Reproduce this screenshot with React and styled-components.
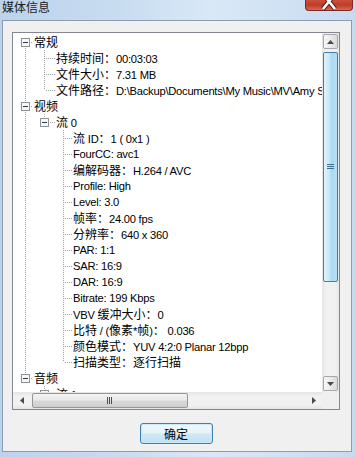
import React from 'react';
import styled, { createGlobalStyle } from 'styled-components';

const GlobalStyle = createGlobalStyle`
  html, body {
    margin: 0;
    padding: 0;
    overflow: hidden;
  }
  body {
    font-family: 'Liberation Sans', 'Noto Sans CJK SC', sans-serif;
  }
`;

const Window = styled.div`
  display: flex;
  flex-direction: column;
  width: 355px;
  height: 457px;
  background: linear-gradient(to right, #bcd3eb 0%, #c9ddf1 35%, #d9e8f7 60%, #c7dbf0 100%);
`;

const TitleBar = styled.div`
  display: flex;
  justify-content: space-between;
  align-items: flex-start;
  height: 20px;
  padding-left: 2px;
`;

const Title = styled.div`
  font-family: 'Noto Sans CJK SC', sans-serif;
  font-size: 12px;
  line-height: 14px;
  color: #1b1b1b;
`;

const CloseButton = styled.div`
  width: 46px;
  height: 10px;
  margin-right: 2px;
  border: 1px solid #7d2a22;
  border-top: 0;
  border-radius: 0 0 4px 4px;
  background: linear-gradient(to bottom, #c9503e 0%, #c13a27 50%, #d66a55 100%);
  overflow: hidden;
  > svg {
    display: block;
  }
`;

const Client = styled.div`
  flex: 1;
  display: flex;
  flex-direction: column;
  align-items: flex-start;
  margin: 0 3px 5px 2px;
  padding: 11px 11px 7px 9px;
  border: 1px solid #8d9db0;
  background: #f0f0f0;
`;

const TreeBox = styled.div`
  display: grid;
  grid-template-columns: 1fr 17px;
  grid-template-rows: 1fr 17px;
  width: 328px;
  height: 378px;
  box-sizing: border-box;
  border: 1px solid #828790;
  background: #fff;
`;

const TreeContent = styled.div`
  overflow: hidden;
  padding-top: 1px;
`;

const Row = styled.div`
  display: flex;
  align-items: center;
  height: 16px;
  white-space: nowrap;
  > svg {
    flex: none;
    display: block;
  }
`;

const Label = styled.span`
  font-family: 'Liberation Sans', 'Noto Sans CJK SC', sans-serif;
  font-size: 11.2px;
  letter-spacing: -0.25px;
  line-height: 16px;
  color: #000;
`;

const Zh = styled.span`
  font-family: 'Noto Sans CJK SC', sans-serif;
  font-size: 12px;
  letter-spacing: 0;
`;

const VScroll = styled.div`
  display: flex;
  flex-direction: column;
  background: linear-gradient(to right, #e4e4e4 0%, #f1f1f1 25%, #f1f1f1 75%, #e6e6e6 100%);
`;

const HScroll = styled.div`
  display: flex;
  align-items: center;
  background: linear-gradient(to bottom, #e4e4e4 0%, #f1f1f1 25%, #f1f1f1 75%, #e6e6e6 100%);
`;

const Corner = styled.div`
  background: #f0f0f0;
`;

const ArrowBox = styled.div`
  display: flex;
  align-items: center;
  justify-content: center;
  flex: none;
  height: 15px;
  margin: 1px;
  box-sizing: border-box;
  border: 1px solid #a7a7a7;
  border-radius: 2px;
  background: linear-gradient(to right, #f7f7f7 0%, #ebebeb 50%, #dadada 100%);
`;

const ArrowPlain = styled.div`
  display: flex;
  align-items: center;
  justify-content: center;
  flex: none;
  width: 17px;
  height: 17px;
`;

const VThumb = styled.div`
  display: flex;
  align-items: center;
  justify-content: center;
  flex: none;
  height: 230px;
  margin: 2px 1px 0;
  box-sizing: border-box;
  border: 1px solid #3c7fb1;
  border-radius: 2px;
  background: linear-gradient(to right, #e3f4fc 0%, #c4e5f6 45%, #a9d9f2 55%, #b6dff5 100%);
`;

const HThumb = styled.div`
  display: flex;
  align-items: center;
  justify-content: center;
  flex: none;
  width: 156px;
  height: 15px;
  margin-left: 2px;
  box-sizing: border-box;
  border: 1px solid #979797;
  border-radius: 2px;
  background: linear-gradient(to bottom, #f4f4f4 0%, #e9e9e9 45%, #d9d9d9 55%, #cecece 100%);
`;

const Spacer = styled.div`
  flex: 1;
`;

const ButtonRow = styled.div`
  display: flex;
  justify-content: center;
  align-self: stretch;
  margin-top: 13px;
`;

const OkButton = styled.button`
  width: 73px;
  height: 21px;
  padding: 0;
  border: 1px solid #3c7fb1;
  border-radius: 3px;
  box-shadow: inset 0 0 0 1px #c6e9fb;
  background: linear-gradient(to bottom, #f3f9fd 0%, #e6f2fa 45%, #cfe7f6 55%, #bfe0f4 100%);
  font-family: 'Noto Sans CJK SC', sans-serif;
  font-size: 12px;
  line-height: 17px;
  color: #000;
`;

const tree = [
  {
    label: '常规',
    children: [
      { label: '持续时间：00:03:03' },
      { label: '文件大小：7.31 MB' },
      { label: '文件路径：D:\\Backup\\Documents\\My Music\\MV\\Amy Studt.flv' },
    ],
  },
  {
    label: '视频',
    children: [
      {
        label: '流 0',
        children: [
          { label: '流 ID：1 ( 0x1 )' },
          { label: 'FourCC: avc1' },
          { label: '编解码器：H.264 / AVC' },
          { label: 'Profile: High' },
          { label: 'Level: 3.0' },
          { label: '帧率：24.00 fps' },
          { label: '分辨率：640 x 360' },
          { label: 'PAR: 1:1' },
          { label: 'SAR: 16:9' },
          { label: 'DAR: 16:9' },
          { label: 'Bitrate: 199 Kbps' },
          { label: 'VBV 缓冲大小：0' },
          { label: '比特 / (像素*帧)： 0.036' },
          { label: '颜色模式：YUV 4:2:0 Planar 12bpp' },
          { label: '扫描类型：逐行扫描' },
        ],
      },
    ],
  },
  {
    label: '音频',
    children: [{ label: '流 1', children: [{ label: '流 ID：2 ( 0x2 )' }] }],
  },
];

const flatten = (nodes, level = 0, guides = [], out = []) => {
  nodes.forEach((node, i) => {
    const hasNext = i < nodes.length - 1;
    out.push({
      label: node.label,
      level,
      guides,
      hasNext,
      hasChildren: !!node.children,
      first: level === 0 && i === 0,
    });
    if (node.children) flatten(node.children, level + 1, [...guides, hasNext], out);
  });
  return out;
};

const rows = flatten(tree);

// box centres and text starts per level, in tree-content pixels
const CX = [12.5, 31.5, 50.5];
const TX = [21, 43, 60];

const Lines = ({ row }) => {
  const c = CX[row.level];
  const w = TX[row.level];
  const dot = { stroke: '#a0a0a0', strokeWidth: 1, strokeDasharray: '1 1' };
  return (
    <svg width={w} height={16} shapeRendering="crispEdges">
      {row.guides.map((g, a) => (g ? <line key={a} x1={CX[a]} x2={CX[a]} y1={0} y2={16} {...dot} /> : null))}
      {!row.first && <line x1={c} x2={c} y1={0} y2={row.hasChildren ? 4 : 8} {...dot} />}
      {row.hasNext && <line x1={c} x2={c} y1={row.hasChildren ? 12 : 8} y2={16} {...dot} />}
      <line x1={row.hasChildren ? c + 5 : c + 1} x2={w - 1} y1={8.5} y2={8.5} {...dot} />
      {row.hasChildren && (
        <g>
          <rect x={c - 4} y={4.5} width={8} height={8} fill="#f7f7f7" stroke="#919191" />
          <line x1={c - 2.5} x2={c + 2.5} y1={8.5} y2={8.5} stroke="#1e3a5a" />
        </g>
      )}
    </svg>
  );
};

const renderText = text =>
  text
    .split(/([\u3000-\u303f\u4e00-\u9fff\uff00-\uffef]+)/)
    .map((part, i) => (i % 2 ? <Zh key={i}>{part}</Zh> : part));

const ArrowUp = () => (
  <svg width="7" height="4">
    <path d="M0 4 L3.5 0 L7 4 Z" fill="#4a4a4a" />
  </svg>
);
const ArrowDown = () => (
  <svg width="7" height="4">
    <path d="M0 0 L3.5 4 L7 0 Z" fill="#4a4a4a" />
  </svg>
);
const ArrowLeft = () => (
  <svg width="4" height="7">
    <path d="M4 0 L0 3.5 L4 7 Z" fill="#4a4a4a" />
  </svg>
);
const ArrowRight = () => (
  <svg width="4" height="7">
    <path d="M0 0 L4 3.5 L0 7 Z" fill="#4a4a4a" />
  </svg>
);

const VGrip = () => (
  <svg width="7" height="6" shapeRendering="crispEdges">
    {[0.5, 2.5, 4.5].map(y => (
      <line key={y} x1="0" x2="7" y1={y} y2={y} stroke="#3b6e94" />
    ))}
  </svg>
);
const HGrip = () => (
  <svg width="6" height="7" shapeRendering="crispEdges">
    {[0.5, 2.5, 4.5].map(x => (
      <line key={x} y1="0" y2="7" x1={x} x2={x} stroke="#4d4d4d" />
    ))}
  </svg>
);

export default () => {
  return (
    <Window>
      <GlobalStyle />
      <TitleBar>
        <Title>媒体信息</Title>
        <CloseButton>
          <svg width="46" height="10">
            <path d="M17 -6 L29 9 M29 -6 L17 9" stroke="#5a1a14" strokeWidth="4.5" />
            <path d="M17 -6 L29 9 M29 -6 L17 9" stroke="#fff" strokeWidth="2.6" />
          </svg>
        </CloseButton>
      </TitleBar>
      <Client>
        <TreeBox>
          <TreeContent>
            {rows.map((row, i) => (
              <Row key={i}>
                <Lines row={row} />
                <Label>{renderText(row.label)}</Label>
              </Row>
            ))}
          </TreeContent>
          <VScroll>
            <ArrowBox>
              <ArrowUp />
            </ArrowBox>
            <VThumb>
              <VGrip />
            </VThumb>
            <Spacer />
            <ArrowBox>
              <ArrowDown />
            </ArrowBox>
          </VScroll>
          <HScroll>
            <ArrowPlain>
              <ArrowLeft />
            </ArrowPlain>
            <HThumb>
              <HGrip />
            </HThumb>
            <Spacer />
            <ArrowPlain>
              <ArrowRight />
            </ArrowPlain>
          </HScroll>
          <Corner />
        </TreeBox>
        <ButtonRow>
          <OkButton>确定</OkButton>
        </ButtonRow>
      </Client>
    </Window>
  );
};
